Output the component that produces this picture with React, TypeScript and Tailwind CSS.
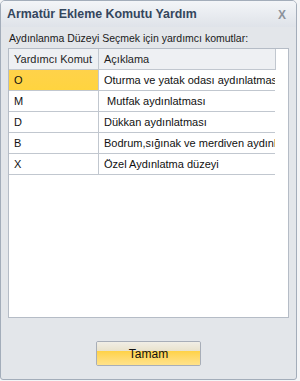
import React from "react";

const rows = [
  { k: "O", d: "Oturma ve yatak odası aydınlatması", sel: true },
  { k: "M", d: " Mutfak aydınlatması" },
  { k: "D", d: "Dükkan aydınlatması" },
  { k: "B", d: "Bodrum,sığınak ve merdiven aydınlatması" },
  { k: "X", d: "Özel Aydınlatma düzeyi" },
];

export default function App() {
  return (
    <div
      className="w-[300px] h-[381px] bg-[#f4f5f7] relative"
      style={{ fontFamily: '"Liberation Sans", Arial, sans-serif' }}
    >
      <div className="w-[297px] h-[380px] flex flex-col rounded-t-[5px] rounded-b-[3px] border border-[#a3adba] bg-[#e3e6ea] overflow-hidden">
        <div className="h-[26px] flex items-center justify-between pl-[6px] pr-[10px] bg-gradient-to-b from-[#f3f5f8] to-[#dfe3e9]">
          <span className="text-[12.4px] font-bold text-[#34465d]">
            Armatür Ekleme Komutu Yardım
          </span>
          <span className="text-[12px] font-bold text-[#8c929b] mt-[1px]">X</span>
        </div>
        <div className="flex flex-col flex-1 px-[7px]">
          <div className="text-[10.5px] text-[#1a1a1a] pt-[5px] pl-[1px] h-[21px] leading-[13px]">
            Aydınlanma Düzeyi Seçmek için yardımcı komutlar:
          </div>
          <div className="h-[270px] bg-white border border-[#b5bcc6] flex flex-col">
            <div className="flex">
              <div className="w-[266px] shrink-0">
                <div className="flex h-[21px] bg-[#eef0f3] border-b border-[#c1c7cf] text-[11px] text-[#1e1e1e]">
                  <div className="w-[90px] border-r border-[#c1c7cf] pl-[5px] flex items-center">
                    Yardımcı Komut
                  </div>
                  <div className="flex-1 pl-[5px] flex items-center">Açıklama</div>
                </div>
                {rows.map((r) => (
                  <div
                    key={r.k}
                    className="flex h-[21px] border-b border-[#c1c7cf] text-[11px] text-[#111]"
                  >
                    <div
                      className={
                        "w-[90px] border-r border-[#c1c7cf] pl-[5px] flex items-center " +
                        (r.sel ? "bg-gradient-to-b from-[#ffd24a] to-[#ffd43f]" : "")
                      }
                    >
                      {r.k}
                    </div>
                    <div className="flex-1 pl-[5px] flex items-center overflow-hidden whitespace-pre">
                      {r.d}
                    </div>
                  </div>
                ))}
              </div>
              <div className="w-px bg-[#c1c7cf] h-[21px]"></div>
            </div>
          </div>
          <div className="flex justify-center mt-[23px]">
            <div className="w-[105px] h-[25px] rounded-[2px] border border-[#a8aeb8] flex flex-col overflow-hidden relative">
              <div className="h-[9px] bg-gradient-to-b from-[#f1eee6] to-[#e9e2cc]"></div>
              <div className="flex-1 bg-gradient-to-b from-[#ffd246] to-[#ffe28a]"></div>
              <span className="absolute inset-0 flex items-center justify-center text-[12px] text-[#111]">
                Tamam
              </span>
            </div>
          </div>
        </div>
      </div>
    </div>
  );
}
